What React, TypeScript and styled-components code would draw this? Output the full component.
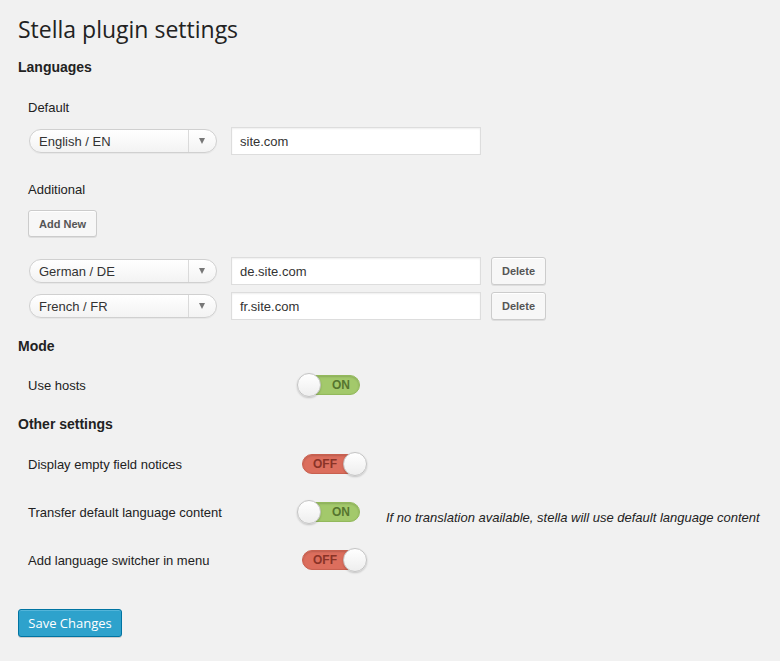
import React from "react";
import styled, { createGlobalStyle } from "styled-components";

const Global = createGlobalStyle`
  html, body { margin: 0; padding: 0; background: #f1f1f1; }
  body { font-family: "Liberation Sans", Arial, sans-serif; color: #222; }
`;

const Page = styled.div`
  display: flex;
  flex-direction: column;
  align-items: flex-start;
  padding: 0 18px 24px;
  width: 780px;
  box-sizing: border-box;
`;

const Title = styled.h1`
  margin: 15px 0 0;
  font-family: "Open Sans", sans-serif;
  font-weight: 400;
  font-size: 23px;
  line-height: 29px;
  color: #222;
`;

const SectionHeading = styled.h3<{ $mt: number }>`
  margin: ${(p) => p.$mt}px 0 0;
  font-size: 14px;
  line-height: 18px;
  font-weight: 700;
  color: #222;
`;

const SubLabel = styled.div<{ $mt: number }>`
  margin: ${(p) => p.$mt}px 0 0 10px;
  font-size: 13px;
  line-height: 16px;
  color: #222;
`;

const LangList = styled.div<{ $mt: number }>`
  display: flex;
  flex-direction: column;
  gap: 7px;
  margin: ${(p) => p.$mt}px 0 0 11px;
`;

const LangRow = styled.div`
  display: flex;
  align-items: center;
  height: 28px;
`;

const Select = styled.div`
  display: flex;
  align-items: stretch;
  width: 188px;
  height: 24px;
  box-sizing: border-box;
  border: 1px solid #d0d0d0;
  border-radius: 12px;
  background: linear-gradient(#ffffff, #f3f3f3);
  box-shadow: 0 1px 0 rgba(0, 0, 0, 0.04);
`;

const SelectText = styled.div`
  flex: 1;
  display: flex;
  align-items: center;
  padding-left: 9px;
  font-size: 13px;
  color: #333;
`;

const SelectArrow = styled.div`
  width: 27px;
  border-left: 1px solid #dadada;
  display: flex;
  align-items: center;
  justify-content: center;
  &::after {
    content: "";
    border-left: 3.5px solid transparent;
    border-right: 3.5px solid transparent;
    border-top: 6px solid #777;
    margin-left: -1px;
  }
`;

const TextInput = styled.div`
  margin-left: 14px;
  width: 250px;
  height: 28px;
  box-sizing: border-box;
  background: #fff;
  border: 1px solid #ddd;
  box-shadow: inset 0 1px 2px rgba(0, 0, 0, 0.07);
  display: flex;
  align-items: center;
  padding-left: 8px;
  font-size: 13px;
  color: #333;
`;

const Button = styled.button<{ $mt?: number; $ml?: number; $h?: number }>`
  margin: ${(p) => p.$mt ?? 0}px 0 0 ${(p) => p.$ml ?? 0}px;
  height: ${(p) => p.$h ?? 27}px;
  padding: 0 10px;
  box-sizing: border-box;
  background: #f7f7f7;
  border: 1px solid #cccccc;
  border-radius: 3px;
  box-shadow: inset 0 1px 0 #fff, 0 1px 0 rgba(0, 0, 0, 0.08);
  font-family: "Liberation Sans", Arial, sans-serif;
  font-weight: 700;
  font-size: 11px;
  color: #555;
  cursor: pointer;
`;

const SaveButton = styled.button`
  margin-top: 34px;
  height: 28px;
  width: 104px;
  box-sizing: border-box;
  background: #2ea2cc;
  border: 1px solid #0074a2;
  border-radius: 3px;
  box-shadow: inset 0 1px 0 rgba(120, 200, 230, 0.5), 0 1px 0 rgba(0, 0, 0, 0.15);
  font-family: "Open Sans", sans-serif;
  font-size: 13px;
  color: #fff;
  padding: 0;
  cursor: pointer;
`;

const ToggleRow = styled.div<{ $mt: number }>`
  display: flex;
  align-items: center;
  height: 30px;
  margin-top: ${(p) => p.$mt}px;
`;

const RowLabel = styled.div`
  width: 279px;
  padding-left: 10px;
  box-sizing: border-box;
  font-size: 13px;
  color: #222;
`;

const Toggle = styled.div`
  position: relative;
  width: 72px;
  height: 26px;
`;

const Track = styled.div<{ $on: boolean }>`
  position: absolute;
  top: 3px;
  left: ${(p) => (p.$on ? 8 : 5)}px;
  width: 55px;
  height: 20px;
  box-sizing: border-box;
  border-radius: 10px;
  background: ${(p) => (p.$on ? "#a3c96b" : "#dc6e5d")};
  border: 1px solid ${(p) => (p.$on ? "#93b95c" : "#c9604f")};
  box-shadow: inset 0 1px 2px rgba(0, 0, 0, 0.15);
  display: flex;
  align-items: center;
  justify-content: ${(p) => (p.$on ? "flex-end" : "flex-start")};
  padding: 0 ${(p) => (p.$on ? 9 : 0)}px 0 ${(p) => (p.$on ? 0 : 10)}px;
  font-size: 12px;
  font-weight: 700;
  color: ${(p) => (p.$on ? "#56752f" : "#8a3327")};
`;

const Knob = styled.div<{ $on: boolean }>`
  position: absolute;
  top: 1px;
  left: ${(p) => (p.$on ? 0 : 46)}px;
  width: 24px;
  height: 24px;
  box-sizing: border-box;
  border-radius: 50%;
  border: 1px solid #c4c4c4;
  background: linear-gradient(#ffffff, #eeeeee);
  box-shadow: 0 1px 2px rgba(0, 0, 0, 0.2);
`;

const Note = styled.div`
  margin-left: 17px;
  margin-top: 10px;
  font-size: 13px;
  font-style: italic;
  color: #222;
  white-space: nowrap;
`;

const Switch = ({ on }: { on: boolean }) => (
  <Toggle>
    <Track $on={on}>{on ? "ON" : "OFF"}</Track>
    <Knob $on={on} />
  </Toggle>
);

const LangLine = ({ lang, host, del }: { lang: string; host: string; del?: boolean }) => (
  <LangRow>
    <Select>
      <SelectText>{lang}</SelectText>
      <SelectArrow />
    </Select>
    <TextInput>{host}</TextInput>
    {del && (
      <Button $ml={10} $h={28}>
        Delete
      </Button>
    )}
  </LangRow>
);

export default function App() {
  return (
    <Page>
      <Global />
      <Title>Stella plugin settings</Title>
      <SectionHeading $mt={14}>Languages</SectionHeading>
      <SubLabel $mt={24}>Default</SubLabel>
      <LangList $mt={11}>
        <LangLine lang="English / EN" host="site.com" />
      </LangList>
      <SubLabel $mt={27}>Additional</SubLabel>
      <Button $mt={12} $ml={10}>Add New</Button>
      <LangList $mt={20}>
        <LangLine lang="German / DE" host="de.site.com" del />
        <LangLine lang="French / FR" host="fr.site.com" del />
      </LangList>
      <SectionHeading $mt={17}>Mode</SectionHeading>
      <ToggleRow $mt={15}>
        <RowLabel>Use hosts</RowLabel>
        <Switch on />
      </ToggleRow>
      <SectionHeading $mt={15}>Other settings</SectionHeading>
      <ToggleRow $mt={16}>
        <RowLabel>Display empty field notices</RowLabel>
        <Switch on={false} />
      </ToggleRow>
      <ToggleRow $mt={18}>
        <RowLabel>Transfer default language content</RowLabel>
        <Switch on />
        <Note>If no translation available, stella will use default language content</Note>
      </ToggleRow>
      <ToggleRow $mt={18}>
        <RowLabel>Add language switcher in menu</RowLabel>
        <Switch on={false} />
      </ToggleRow>
      <SaveButton>Save Changes</SaveButton>
    </Page>
  );
}
